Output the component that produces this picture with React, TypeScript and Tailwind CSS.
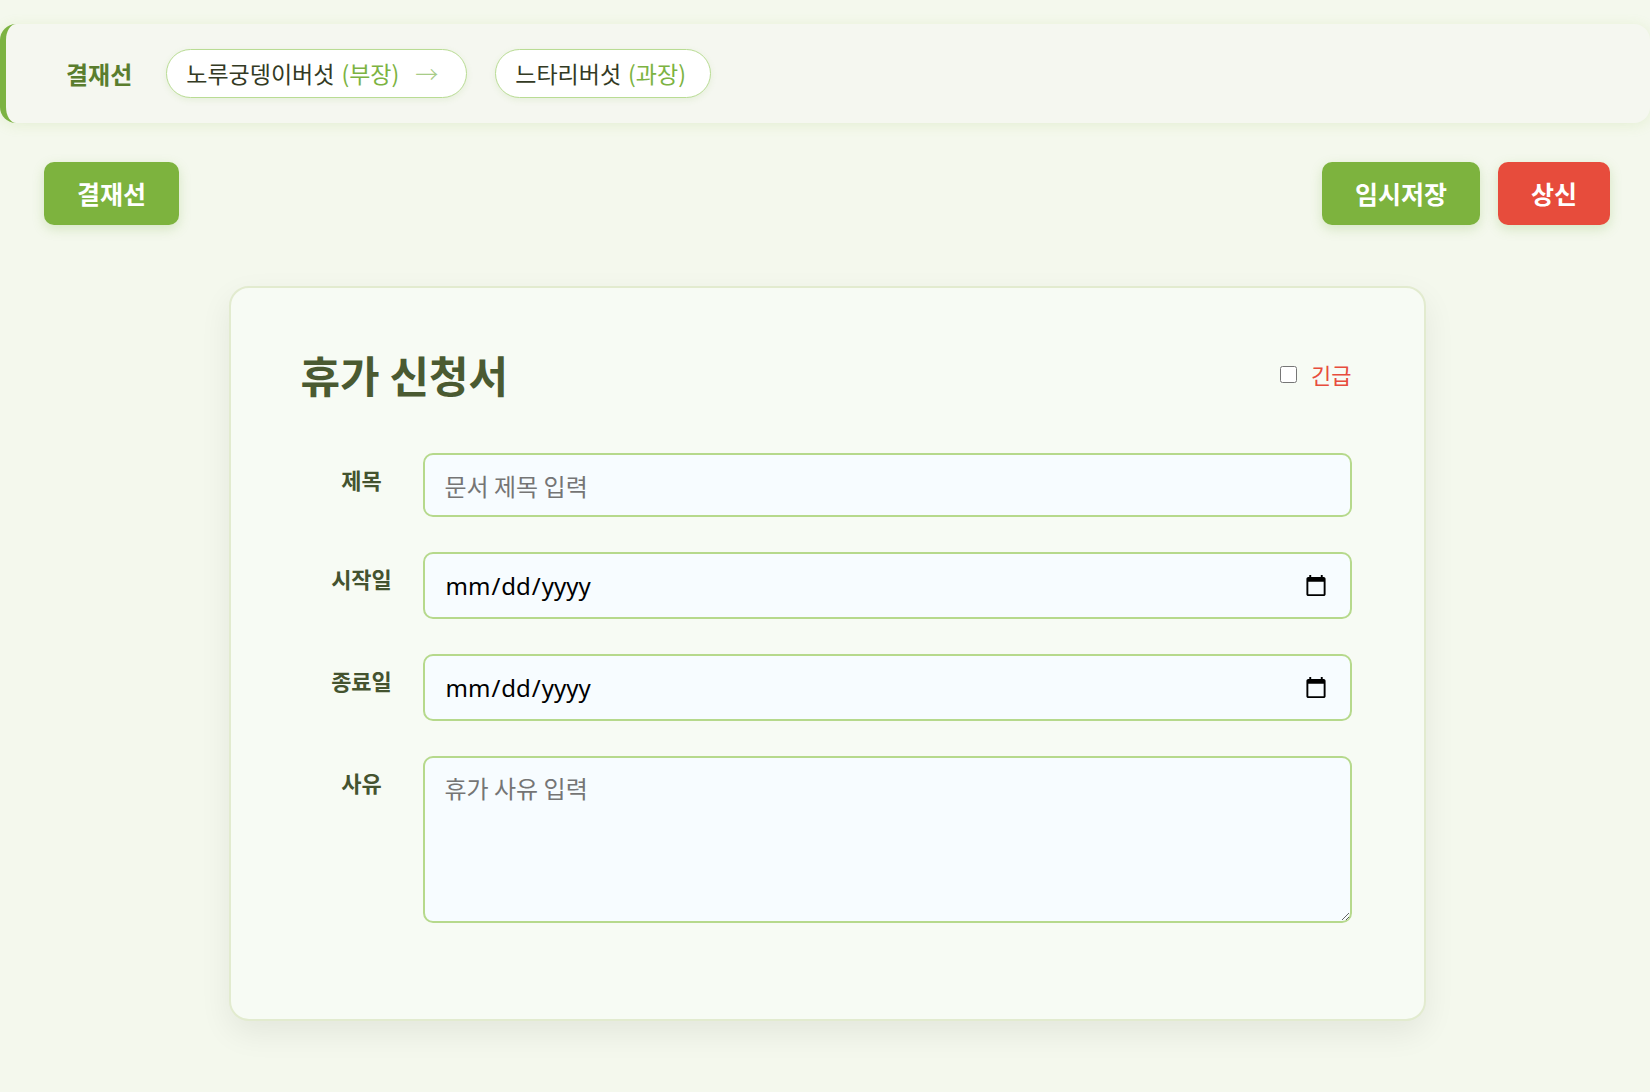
import React, { useState } from 'react';

const FONT = "font-['Noto_Sans_CJK_KR','Noto_Sans',sans-serif]";

const approvers = [
  { name: '노루궁뎅이버섯', rank: '부장' },
  { name: '느타리버섯', rank: '과장' },
];

const Row = ({ label, children }: { label: string; children: React.ReactNode }) => (
  <div className="flex items-start">
    <label className="w-[122px] shrink-0 pt-[10px] text-center text-[22px] font-semibold leading-[32px] text-[#44532f]">
      {label}
    </label>
    <div className="flex-1">{children}</div>
  </div>
);

const fieldCls =
  "w-full rounded-[10px] border-2 border-[#b6d98c] bg-[#f7fcff] px-5 outline-none focus:border-[#7cb342]";

const App = () => {
  const [urgent, setUrgent] = useState(false);

  return (
    <div className={`min-h-[1092px] bg-[#f4f8ed] pt-6 ${FONT}`}>
      {/* 결재선 bar */}
      <div className="flex h-[99px] items-center rounded-[16px] border-l-[6px] border-[#7cb342] bg-[#f5f7f0] pl-[60px] shadow-[0_2px_14px_rgba(140,190,60,0.14)]">
        <span className="mr-[34px] text-[24px] font-bold text-[#5a7d2e]">결재선</span>
        <div className="flex items-center gap-[28px]">
          {approvers.map((a, i) => (
            <div
              key={a.name}
              className="flex h-[49px] items-center rounded-full border border-[#b9dc94] bg-white pl-[19px] pr-[24px] text-[23px] text-[#333a24] shadow-[0_2px_6px_rgba(124,179,66,0.12)]"
            >
              <span>{a.name}</span>
              <span className="ml-[7px] text-[#7cb342]">({a.rank})</span>
              {i < approvers.length - 1 && (
                <span className="ml-[16px] mr-[4px] font-light text-[#a8cc88]">→</span>
              )}
            </div>
          ))}
        </div>
      </div>

      {/* Actions */}
      <div className="mt-[39px] flex items-center justify-between pl-[44px] pr-[40px]">
        <button className="h-[63px] w-[135px] rounded-[10px] bg-[#7db33e] text-[25px] font-bold text-white shadow-[0_4px_12px_rgba(124,179,66,0.25)]">
          결재선
        </button>
        <div className="flex gap-[18px]">
          <button className="h-[63px] w-[158px] rounded-[10px] bg-[#7db33e] text-[25px] font-bold text-white shadow-[0_4px_12px_rgba(124,179,66,0.25)]">
            임시저장
          </button>
          <button className="h-[63px] w-[112px] rounded-[10px] bg-[#e74c3c] text-[25px] font-bold text-white shadow-[0_4px_12px_rgba(124,179,66,0.25)]">
            상신
          </button>
        </div>
      </div>

      {/* Form card */}
      <div className="mt-[61px] pl-[4px]">
        <div className="mx-auto w-[1197px] rounded-[20px] border-2 border-[#e2ebcf] bg-[#f7fbf4] pb-[96px] pl-[70px] pr-[72px] pt-[60px] shadow-[0_12px_32px_rgba(0,0,0,0.07)]">
          <div className="mb-[53px] flex items-center justify-between">
            <h1 className="text-[43px] font-bold leading-[52px] text-[#4a5a31]">휴가 신청서</h1>
            <label className="flex items-center gap-[14px] text-[22px] text-[#e74c3c]">
              <input
                type="checkbox"
                checked={urgent}
                onChange={e => setUrgent(e.target.checked)}
                className="h-[17px] w-[17px]"
              />
              긴급
            </label>
          </div>

          <div className="flex flex-col gap-[35px]">
            <Row label="제목">
              <input
                type="text"
                placeholder="문서 제목 입력"
                className={`${fieldCls} h-[64px] text-[24px] placeholder:text-[#757575]`}
              />
            </Row>
            <Row label="시작일">
              <input type="date" className={`${fieldCls} h-[67px] font-['Noto_Sans',sans-serif] text-[24px] text-black`} />
            </Row>
            <Row label="종료일">
              <input type="date" className={`${fieldCls} h-[67px] font-['Noto_Sans',sans-serif] text-[24px] text-black`} />
            </Row>
            <Row label="사유">
              <textarea
                placeholder="휴가 사유 입력"
                className={`${fieldCls} block h-[167px] py-[12px] text-[24px] placeholder:text-[#757575]`}
              />
            </Row>
          </div>
        </div>
      </div>
    </div>
  );
};

export default App;
